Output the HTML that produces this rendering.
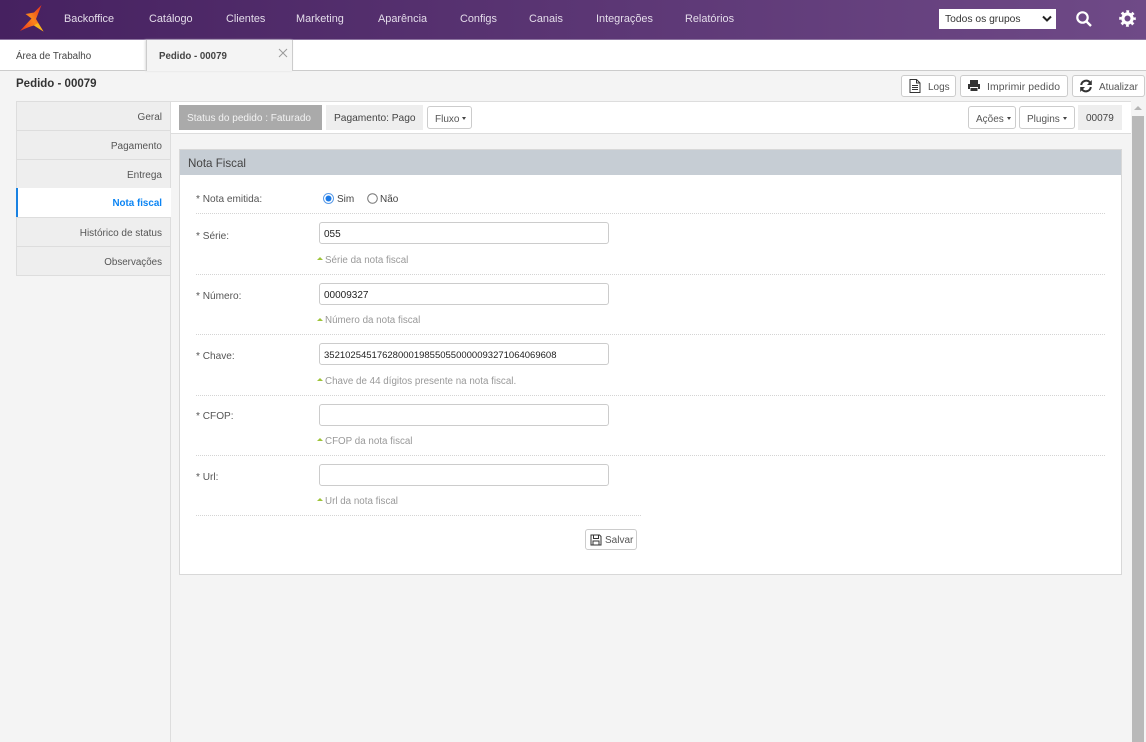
<!DOCTYPE html>
<html lang="pt">
<head>
<meta charset="utf-8">
<style>
html,body{margin:0;padding:0;width:1146px;height:742px;overflow:hidden;background:#f4f4f4;font-family:"Liberation Sans",sans-serif;font-size:10px;color:#444}
.a{position:absolute;box-sizing:border-box}
.t{position:absolute;white-space:nowrap;line-height:14px}
.nav{color:#e4dcea;top:12px;font-size:10.9px}
.btn{position:absolute;box-sizing:border-box;background:#fff;border:1px solid #ccc;border-radius:3px}
.side{position:absolute;left:16px;width:155px;height:30px;box-sizing:border-box;background:#eee;border:1px solid #ddd;text-align:right;padding:9px 8px 0 0;line-height:14px;color:#555;font-size:10px}
.dot{position:absolute;left:196px;width:909px;border-top:1px dotted #d4d4d4;height:0}
.inp{position:absolute;left:319px;width:290px;height:22px;box-sizing:border-box;background:#fff;border:1px solid #ccc;border-radius:3px;font-size:10px;color:#222;padding:5px 0 0 4px;line-height:14px}
.lb{position:absolute;left:196px;color:#555;white-space:nowrap;line-height:14px;font-size:10.1px;margin-top:1px}
.hint{position:absolute;left:325px;color:#999;white-space:nowrap;line-height:14px;font-size:9.8px;margin-top:1px}
.tri{position:absolute;left:317px;width:0;height:0;border-left:3px solid transparent;border-right:3px solid transparent;border-bottom:3px solid #9ec43a}
.car{display:inline-block;width:0;height:0;border-left:2px solid transparent;border-right:2px solid transparent;border-top:3px solid #444;vertical-align:2px;margin-left:3px}
</style>
</head>
<body>
<!-- header -->
<div class="a" style="left:0;top:0;width:1146px;height:40px;background:linear-gradient(90deg,#462160 0%,#6f4a87 100%);border-bottom:1px solid #8d74a0"></div>
<svg class="a" style="left:18px;top:4px" width="28" height="29" viewBox="0 0 28 29">
<defs><linearGradient id="g" x1="0" y1="1" x2="1" y2="0.2"><stop offset="0" stop-color="#ee2a1c"/><stop offset=".55" stop-color="#f9851c"/><stop offset="1" stop-color="#e8351c"/></linearGradient></defs>
<path d="M23.5 1 L16 8.5 L7.5 10 L13.5 14.5 L2 27 Q10 23 16 21.5 L25.5 27.5 L18 15 Z" fill="url(#g)"/>
<path d="M16 21.5 L25.5 27.5 L20 19 Z" fill="#f6b81e"/>
</svg>
<span class="t nav" style="left:64px">Backoffice</span>
<span class="t nav" style="left:149px">Catálogo</span>
<span class="t nav" style="left:226px">Clientes</span>
<span class="t nav" style="left:296px">Marketing</span>
<span class="t nav" style="left:378px">Aparência</span>
<span class="t nav" style="left:460px">Configs</span>
<span class="t nav" style="left:529px">Canais</span>
<span class="t nav" style="left:596px">Integrações</span>
<span class="t nav" style="left:685px">Relatórios</span>
<div class="a" style="left:939px;top:9px;width:117px;height:20px;background:#fff"></div>
<span class="t" style="left:945px;top:13px;color:#333;font-size:10.3px">Todos os grupos</span>
<svg class="a" style="left:1041px;top:15px" width="12" height="8" viewBox="0 0 12 8"><path d="M2 1.5 L6 5.5 L10 1.5" fill="none" stroke="#222" stroke-width="2"/></svg>
<svg class="a" style="left:1075px;top:10px" width="18" height="18" viewBox="0 0 18 18"><circle cx="7.5" cy="7.5" r="5.2" fill="none" stroke="#fff" stroke-width="2.2"/><path d="M11.5 11.5 L16 16" stroke="#fff" stroke-width="2.4"/></svg>
<svg class="a" style="left:1119px;top:10px" width="17" height="17" viewBox="0 0 17 17"><circle cx="8.5" cy="8.5" r="6.8" fill="none" stroke="#fff" stroke-width="3" stroke-dasharray="2.67 2.67" stroke-dashoffset="1.33"/><circle cx="8.5" cy="8.5" r="4.6" fill="none" stroke="#fff" stroke-width="3.2"/></svg>

<!-- tab bar -->
<div class="a" style="left:0;top:40px;width:1146px;height:31px;background:#fff;border-bottom:1px solid #ccc"></div>
<span class="t" style="left:16px;top:49px;color:#444;font-size:9.8px;margin-top:1px">Área de Trabalho</span>
<div class="a" style="left:146px;top:40px;width:147px;height:31px;background:#f4f4f4;border-left:1px solid #ccc;border-right:1px solid #ccc;box-shadow:-1px 0 2px #ddd"></div>
<span class="t" style="left:159px;top:49px;font-weight:bold;color:#444;font-size:9.7px;margin-top:1px">Pedido - 00079</span>
<svg class="a" style="left:278px;top:48px" width="10" height="10" viewBox="0 0 10 10"><path d="M1 1 L9 9 M9 1 L1 9" stroke="#999" stroke-width="1"/></svg>

<!-- title -->
<span class="t" style="left:16px;top:77px;font-weight:bold;color:#333;font-size:11.5px">Pedido - 00079</span>

<!-- top buttons -->
<div class="btn" style="left:901px;top:75px;width:55px;height:22px"></div>
<svg class="a" style="left:908px;top:78px" width="14" height="16" viewBox="0 0 14 16"><path d="M2 1.5 H8.5 L12 5 V14.5 H2 Z M8.5 1.5 V5 H12 M4 7.5 H10 M4 9.5 H10 M4 11.5 H10" fill="none" stroke="#333" stroke-width="1"/></svg>
<span class="t" style="left:928px;top:81px;color:#555">Logs</span>
<div class="btn" style="left:960px;top:75px;width:108px;height:22px"></div>
<svg class="a" style="left:967px;top:79px" width="14" height="13" viewBox="0 0 14 13"><path d="M3 1 H11 V5 H3 Z M1 5 H13 V10 H11 V8 H3 V10 H1 Z M3.5 9 H10.5 V12 H3.5 Z" fill="#333"/></svg>
<span class="t" style="left:987px;top:81px;color:#555;font-size:10.4px;letter-spacing:.1px">Imprimir pedido</span>
<div class="btn" style="left:1072px;top:75px;width:73px;height:22px"></div>
<svg class="a" style="left:1079px;top:79px" width="14" height="14" viewBox="0 0 14 14"><path d="M2.2 6 A5 5 0 0 1 11 3.5 M11.8 8 A5 5 0 0 1 3 10.5" fill="none" stroke="#333" stroke-width="2"/><path d="M12.8 1 V6 H8 Z M1.2 13 V8 H6 Z" fill="#333"/></svg>
<span class="t" style="left:1099px;top:81px;color:#555">Atualizar</span>

<!-- sidebar -->
<div class="a" style="left:170px;top:101px;width:1px;height:641px;background:#ddd"></div>
<div class="side" style="top:101px">Geral</div>
<div class="side" style="top:130px">Pagamento</div>
<div class="side" style="top:159px">Entrega</div>
<div class="side" style="top:188px;background:#fff;border:0;border-left:2px solid #1a82e2;border-right:1px solid #fff;color:#0b84f3;font-weight:bold;padding-top:9px;padding-right:8px;font-size:9.8px">Nota fiscal</div>
<div class="side" style="top:217px">Histórico de status</div>
<div class="side" style="top:246px;font-size:9.8px">Observações</div>

<!-- top bar -->
<div class="a" style="left:171px;top:101px;width:960px;height:33px;background:#fff;border-top:1px solid #ddd;border-bottom:1px solid #ddd"></div>
<div class="a" style="left:179px;top:105px;width:143px;height:25px;background:#aaa"></div>
<span class="t" style="left:187px;top:112px;color:#f2f2f2;font-size:10.05px">Status do pedido : Faturado</span>
<div class="a" style="left:326px;top:105px;width:97px;height:25px;background:#eee"></div>
<span class="t" style="left:334px;top:112px;color:#444;font-size:10.2px">Pagamento: Pago</span>
<div class="btn" style="left:427px;top:106px;width:45px;height:23px;padding:6px 0 0 7px;line-height:14px;color:#555">Fluxo<i class="car"></i></div>
<div class="btn" style="left:968px;top:106px;width:48px;height:23px;padding:6px 0 0 7px;line-height:14px;color:#555">Ações<i class="car"></i></div>
<div class="btn" style="left:1019px;top:106px;width:56px;height:23px;padding:6px 0 0 7px;line-height:14px;color:#555">Plugins<i class="car"></i></div>
<div class="a" style="left:1078px;top:105px;width:44px;height:25px;background:#eee"></div>
<span class="t" style="left:1086px;top:112px;color:#444;font-size:10px">00079</span>

<!-- scrollbar -->
<div class="a" style="left:1131px;top:102px;width:15px;height:640px;background:#f4f4f4"></div>
<div class="a" style="left:1134px;top:106px;width:0;height:0;border-left:4px solid transparent;border-right:4px solid transparent;border-bottom:4px solid #b5b5b5"></div>
<div class="a" style="left:1132px;top:116px;width:12px;height:626px;background:#b9b9b9"></div>

<!-- panel -->
<div class="a" style="left:179px;top:149px;width:943px;height:426px;background:#fff;border:1px solid #d8d8d8"></div>
<div class="a" style="left:180px;top:150px;width:941px;height:25px;background:#c6cdd4"></div>
<span class="t" style="left:188px;top:157px;font-size:11.6px;color:#444">Nota Fiscal</span>

<span class="lb" style="top:192px">* Nota emitida:</span>
<svg class="a" style="left:323px;top:193px" width="11" height="11" viewBox="0 0 11 11"><circle cx="5.5" cy="5.5" r="5" fill="#fff" stroke="#5a9be8"/><circle cx="5.5" cy="5.5" r="3" fill="#1a7ae8"/></svg>
<span class="t" style="left:337px;top:193px;color:#444">Sim</span>
<svg class="a" style="left:367px;top:193px" width="11" height="11" viewBox="0 0 11 11"><circle cx="5.5" cy="5.5" r="4.8" fill="#fff" stroke="#777"/></svg>
<span class="t" style="left:380px;top:193px;color:#444">Não</span>
<div class="dot" style="top:213px"></div>

<span class="lb" style="top:229px">* Série:</span>
<div class="inp" style="top:222px">055</div>
<div class="tri" style="top:257px"></div>
<span class="hint" style="top:253px">Série da nota fiscal</span>
<div class="dot" style="top:274px"></div>

<span class="lb" style="top:289px">* Número:</span>
<div class="inp" style="top:283px">00009327</div>
<div class="tri" style="top:318px"></div>
<span class="hint" style="top:313px">Número da nota fiscal</span>
<div class="dot" style="top:334px"></div>

<span class="lb" style="top:349px">* Chave:</span>
<div class="inp" style="top:343px;font-size:9.5px">35210254517628000198550550000093271064069608</div>
<div class="tri" style="top:378px"></div>
<span class="hint" style="top:374px">Chave de 44 dígitos presente na nota fiscal.</span>
<div class="dot" style="top:395px"></div>

<span class="lb" style="top:409px">* CFOP:</span>
<div class="inp" style="top:404px"></div>
<div class="tri" style="top:438px"></div>
<span class="hint" style="top:434px">CFOP da nota fiscal</span>
<div class="dot" style="top:455px"></div>

<span class="lb" style="top:470px">* Url:</span>
<div class="inp" style="top:464px"></div>
<div class="tri" style="top:498px"></div>
<span class="hint" style="top:494px">Url da nota fiscal</span>
<div class="dot" style="top:515px;width:445px"></div>

<div class="btn" style="left:585px;top:529px;width:52px;height:21px"></div>
<svg class="a" style="left:590px;top:534px" width="12" height="12" viewBox="0 0 12 12"><path d="M1 1 H9.5 L11 2.5 V11 H1 Z M3.5 1 V4.5 H8.5 V1 M3 11 V7 H9 V11" fill="none" stroke="#333" stroke-width="1"/></svg>
<span class="t" style="left:605px;top:534px;color:#555">Salvar</span>
</body>
</html>
